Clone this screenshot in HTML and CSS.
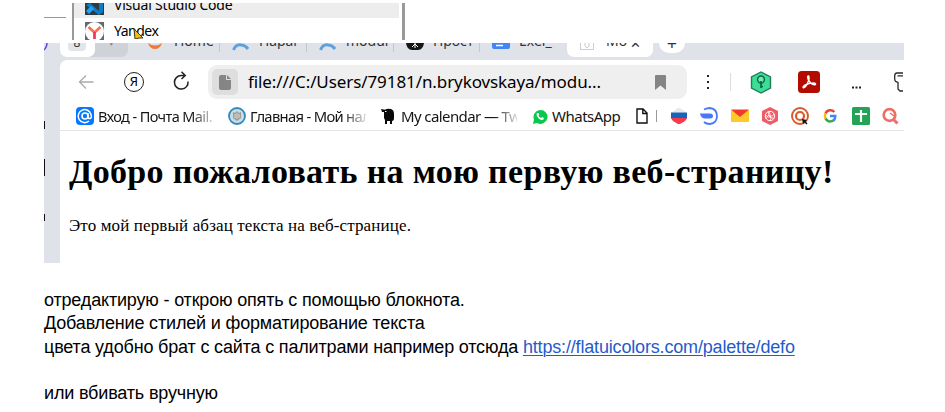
FILE: index.html
```html
<!DOCTYPE html>
<html lang="ru">
<head>
<meta charset="utf-8">
<title>Урок</title>
<link rel="stylesheet" href="styles.css">
</head>
<body>
<section class="menu">
  <div class="menu-left"></div>
  <div class="menu-list">
    <div class="menu-row selected">
      <svg width="19" height="12" viewBox="0 0 19 12"><path fill="#303943" d="M0 0h19v12H0z"/><path fill="#087dc8" d="M1 2l4-2 9 8V0h4v9l-4 3L1 2z"/><path fill="#22a5ee" d="M1 8l5-5 3 3-5 5z"/></svg>
      <span class="vs">Visual Studio Code</span>
    </div>
    <div class="menu-row yandex">
      <svg width="19" height="18" viewBox="0 0 19 18"><path fill="#686868" d="M0 0h19v18H0z"/><circle cx="9.5" cy="9.5" r="9.5" fill="#fff"/><path d="M3.5 5l6 5.500 6-5.500" fill="none" stroke="#ff6a4d" stroke-width="2.500"/><path d="M9.500 10v7" stroke="#f0355b" stroke-width="2.700"/></svg>
      <span class="ya">Yandex</span>
      <svg class="cursor" width="11" height="10" viewBox="0 0 11 10"><path d="M1 0l9 9-4 0-4 1z" fill="#f5b91b" stroke="#4b3a12"/></svg>
    </div>
  </div>
</section>

<section class="browser">
  <div class="tabs">
    <svg class="edge" width="4" height="17" viewBox="0 0 4 17"><path d="M0 7Q3 4 3 0" fill="none" stroke="#5b50df" stroke-width="1.500"/></svg>
    <div class="group"><div class="count"><b>8</b></div><i>▾</i></div>
    <svg class="jup" width="16" height="8" viewBox="0 0 16 8"><path d="M1 0q7 5 14 0-2 6-7 6T1 0z" fill="#f37a32"/></svg>
    <span class="tab t1">Home</span>
    <i class="sep"></i>
    <svg class="arc" width="18" height="8" viewBox="0 0 18 8"><path d="M1.500 7Q4 1 9 2q4 0 7 4" fill="none" stroke="#5f9fdb" stroke-width="3"/></svg>
    <span class="tab t2">Параг</span>
    <i class="sep"></i>
    <svg class="arc" width="18" height="8" viewBox="0 0 18 8"><path d="M1.500 7Q4 1 9 2q4 0 7 4" fill="none" stroke="#5f9fdb" stroke-width="3"/></svg>
    <span class="tab t3">modul</span>
    <i class="sep"></i>
    <svg class="gpt" width="18" height="8" viewBox="0 0 18 8"><path d="M0 0h18q-1 7-6 7H6Q1 7 0 0z" fill="#161616"/><path d="M6 4l3-3 3 3M9 0v5" fill="none" stroke="#fff"/></svg>
    <span class="tab t4">Прост</span>
    <i class="sep"></i>
    <svg class="docs" width="18" height="7" viewBox="0 0 18 7"><path d="M0 0h18v4q0 2-2 2H2Q0 6 0 4z" fill="#4285f4"/><path d="M4 2.500h7" stroke="#fff" stroke-width="1.500"/></svg>
    <span class="tab t5">Exel_</span>
    <div class="active"><svg width="14" height="8" viewBox="0 0 14 8"><path d="M.5 0v6.500h13V0M5 0v3l2 2 2-2V0" fill="none" stroke="#ccc"/></svg><span>Мо</span><em>✕</em></div>
    <div class="plus">+</div>
  </div>

  <div class="frame">
    <div class="side"><i class="m1"></i><i class="m2"></i><i class="m3"></i></div>
    <div class="window">
      <div class="toolbar">
        <svg class="back" width="16" height="16" viewBox="0 0 16 16"><path d="M15.500 8H1.500M8 1.500L1.500 8 8 14.500" fill="none" stroke="#aaa" stroke-width="1.300"/></svg>
        <div class="home">Я</div>
        <svg class="reload" width="17" height="20" viewBox="0 0 17 20"><path d="M15 10.500A6.800 6.800 0 1 1 8.200 4.500H12M8.500.8L12.200 4.500 8.500 8" fill="none" stroke="#222" stroke-width="1.500"/></svg>
        <div class="address">
          <div class="file"><svg width="12" height="15" viewBox="0 0 12 15"><path d="M2 0h5v5h5v8q0 2-2 2H2q-2 0-2-2V2q0-2 2-2zM8 0l4 4H8z" fill="#858585"/></svg></div>
          <span class="url">file:///C:/Users/79181/n.brykovskaya/modu...</span>
          <svg class="mark" width="11" height="15" viewBox="0 0 11 15"><path d="M0 1q0-1 1-1h9q1 0 1 1v14l-5.500-4.500L0 15z" fill="#858585"/></svg>
        </div>
        <svg class="dots" width="4" height="16" viewBox="0 0 4 16"><path d="M1 1h2v2H1zM1 7h2v2H1zM1 13h2v2H1z" fill="#222"/></svg>
        <i class="line"></i>
        <svg class="hex" width="22" height="23" viewBox="0 0 22 23"><path d="M11 1l9.500 5v11L11 22 1.500 17V6z" fill="#38df94" stroke="#277a5b" stroke-width="1.400"/><circle cx="11" cy="8.500" r="3.400" fill="#68efb2" stroke="#176349" stroke-width="1.500"/><path d="M11 10v7M13 15.500h-2" stroke="#176349" stroke-width="1.700"/></svg>
        <svg class="pdf" width="22" height="22" viewBox="0 0 22 22"><rect width="22" height="22" rx="3.500" fill="#b30b00"/><path d="M10.600 5c-2 0-.5 4.500 2 7 3 2.500 5.500 2 4.800.7-.8-1.300-6-.5-9 .8-3 1.300-4 3-2.800 3.200 2 .2 6.800-8.200 5-11.700z" fill="none" stroke="#fff" stroke-width="1.500"/></svg>
        <svg class="more" width="11" height="3" viewBox="0 0 11 3"><path d="M1 .5h2v2H1zM4.500.5h2v2h-2zM8 .5h2v2H8z" fill="#222"/></svg>
        <svg class="key" width="9" height="20" viewBox="0 0 9 20"><path d="M10 1H3Q.7 1 .7 4v3q0 2 1.300 2.700l2 .8V17l2 2h4M3.500 3.800H9" fill="none" stroke="#292929" stroke-width="1.300"/></svg>
      </div>
      <div class="bookmarks">
        <div class="bm b1"><svg width="18" height="18" viewBox="0 0 18 18"><rect width="18" height="18" rx="4" fill="#0877ff"/><circle cx="9" cy="9" r="3" fill="none" stroke="#fff" stroke-width="1.600"/><path d="M12 6v4q.3 2 2 1.500Q16 11 15 7.500A6.500 6.500 0 1 0 13 14" fill="none" stroke="#fff" stroke-width="1.500"/></svg><span class="fade">Вход - Почта Mail.</span></div>
        <div class="bm b2"><svg width="18" height="18" viewBox="0 0 18 18"><circle cx="9" cy="9" r="8" fill="#c9dce6" stroke="#3489bd" stroke-width="1.800"/><path d="M5 5l2 1 2-2 2 2 2-1v6l-4 3-4-3z" fill="#9b9c94"/><path d="M7 7v4M9 6v6M11 7v4" stroke="#ddd"/></svg><span class="fade">Главная - Мой нал</span></div>
        <div class="bm b3"><svg width="14" height="17" viewBox="0 0 14 17"><path d="M0 1l4 .8Q6 0 10 1q3 1 3 5v4q0 3-2 3v3H9v-3H6v3H4v-4L3 10V4H1z" fill="#090909"/><path d="M4 3.500h1.500" stroke="#fff"/></svg><span class="fade">My calendar — Tw</span></div>
        <div class="bm b4"><svg width="16" height="17" viewBox="0 0 16 17"><path d="M1 16L2 11.500A7 7 0 1 1 5 15z" fill="#08c94d"/><path d="M5 5q-1 1 0 3 2 4 5 4 2 0 2-2l-2-1-1 1Q7 9 6.500 7.500l.8-1L6.500 5z" fill="#fff"/></svg><span>WhatsApp</span></div>
        <div class="bm b5"><svg width="12" height="16" viewBox="0 0 12 16"><path d="M1 1h6l4 4v10H1zM6.800 1v4.500H11" fill="none" stroke="#111" stroke-width="1.400"/></svg><i></i></div>
        <svg class="ic" viewBox="0 0 18 18"><path d="M1.500 5.500L8 1q1-.5 2 0l6.500 4.500z" fill="#e8e9ee"/><path d="M1 5.500h16v6H1z" fill="#1764ba"/><path d="M1 11h16q-1 2-2 3l-5 3H8l-5-3q-1-1-2-3z" fill="#f43a4b"/></svg>
        <svg class="ic" viewBox="0 0 18 18"><path d="M0 6.500h10q3 0 3 2.500t-3 2.500H6Q1 12 0 6.500z" fill="#4678fa"/><path d="M4 2.500Q7 1 10 1q7 1 7 8t-7 8q-4 0-6-2" fill="none" stroke="#4678fa" stroke-width="1.800"/></svg>
        <svg class="ic" viewBox="0 0 18 18"><path d="M0 3h18v12H0z" fill="#ffca28"/><path d="M0 2.500h18L9 10z" fill="#ef3a2d"/></svg>
        <svg class="ic" viewBox="0 0 18 18"><path d="M9 0l8 4v10l-8 4-8-4V4z" fill="#ee5c66"/><circle cx="9" cy="9" r="4.700" fill="none" stroke="#fff"/><path d="M9 4q-3 4 0 5t4-2M5 8q3 4 4 1t-2-4M9 14q2-3 0-5t-4 3M13 11q-4 1-4-2" fill="none" stroke="#fff" stroke-width=".8"/></svg>
        <svg class="ic" viewBox="0 0 18 18"><circle cx="9" cy="9" r="8" fill="#fff" stroke="#db5928" stroke-width="1.900"/><circle cx="9" cy="9" r="4" fill="none" stroke="#db5928" stroke-width="2.200"/><path d="M11 12l5 1-1.500 1.500 2 2-1 1-2-2L12 17z" fill="#111"/></svg>
        <svg class="ic" viewBox="0 0 18 18" fill="none" stroke-width="2.500"><path d="M13.300 5A5.300 5.300 0 0 0 4.500 6.500" stroke="#ea4335"/><path d="M4.300 6.500q-1 3 .2 5" stroke="#fbbc05"/><path d="M4.500 11.500q3.500 5 8.500 1.500" stroke="#34a853"/><path d="M9 9h5.300q0 3-1.700 4.500" stroke="#4285f4"/></svg>
        <svg class="ic" viewBox="0 0 18 18"><rect width="18" height="18" rx="1.500" fill="#23a455"/><path d="M9 3v12M3 7h12" stroke="#fff" stroke-width="2.200"/></svg>
        <svg class="ic last" viewBox="0 0 18 18"><circle cx="7.500" cy="8" r="5.800" fill="none" stroke="#ee6e68" stroke-width="2.700"/><path d="M11 12l4.500 4.500" stroke="#ee6e68" stroke-width="3"/><path d="M8 6l4 3" stroke="#ee6e68" stroke-width="1.500"/></svg>
      </div>
      <div class="page">
        <h1>Добро пожаловать на мою первую веб-страницу!</h1>
        <p>Это мой первый абзац текста на веб-странице.</p>
      </div>
    </div>
  </div>
</section>

<section class="notes">
  <p>отредактирую - открою опять с помощью блокнота.</p>
  <p>Добавление стилей и форматирование текста</p>
  <p>цвета удобно брат с сайта с палитрами например отсюда <a href="#">https://flatuicolors.com/palette/defo</a></p>
  <p class="gap">или вбивать вручную</p>
</section>
</body>
</html>
```
FILE: styles.css
```css
* { box-sizing: border-box; }
body { margin: 0; padding: 3px 0 0 44px; background: #fff; color: #000; overflow: hidden; height: 412px; }
svg { display: block; flex: none; }
i, em { font-style: normal; }

.menu { display: flex; height: 37px; width: 361px; overflow: hidden; border-right: 3px solid #999; font: 14px "Noto Sans", sans-serif; }
.menu-left { width: 30px; border-right: 2px solid #999; background: linear-gradient(#999, #999) 0 14px / 22px 1px no-repeat; }
.menu-list { flex: 1; }
.menu-row { display: flex; padding-left: 11px; }
.menu-row span { white-space: nowrap; margin-left: 10px; letter-spacing: -.2px; }
.selected { height: 15px; background: #ededed; margin-right: 3px; }
.vs { line-height: 18px; margin-top: -7px; }
.yandex { height: 22px; padding-top: 4px; position: relative; }
.menu-row .ya { line-height: 18px; letter-spacing: -.5px; }
.cursor { position: absolute; left: 59px; top: 11px; }

.browser { width: 860px; height: 220px; margin-top: 3px; overflow: hidden; font-family: "Noto Sans", sans-serif; background: #dfe2e9; }
.tabs { display: flex; height: 17px; overflow: hidden; font-size: 14px; color: #333; }
.tab { height: 17px; line-height: 18px; margin-top: -11px; white-space: nowrap; overflow: hidden; }
.edge { margin-right: 12px; }
.group { width: 68px; height: 14px; border-radius: 0 0 7px 7px; background: #cfd2d8; display: flex; }
.count { width: 35px; height: 14px; background: #fff; border-radius: 0 0 7px 7px; padding-left: 8px; }
.count b { display: block; width: 18px; height: 8px; border-radius: 0 0 4px 4px; background: #e2e5ea; font-size: 12px; line-height: 0; text-align: center; font-weight: 400; overflow: hidden; }
.group i { margin-left: 14px; font-size: 9px; line-height: 0; color: #888; }
.jup { margin: 0 11px 0 19px; }
.t1 { width: 45px; }
.sep { width: 1px; height: 9px; background: #c4c7ce; }
.arc { margin: 0 9px 0 12px; }
.t2, .t3 { width: 47px; }
.gpt { margin: 0 9px 0 12px; }
.t4 { width: 46px; }
.docs { margin: 0 9px 0 12px; }
.t5 { width: 48px; }
.active { width: 86px; height: 14px; background: #fff; border-radius: 0 0 7px 7px; padding-left: 13px; display: flex; }
.active span { margin: -11px 0 0 12px; line-height: 18px; width: 24px; overflow: hidden; }
.active em { line-height: 0; font-size: 13px; }
.plus { width: 26px; height: 10px; background: #fff; border-radius: 0 0 13px 13px; margin-left: 6px; text-align: center; line-height: 0; font-size: 18px; }

.frame { display: flex; height: 203px; }
.side { width: 16px; display: flex; flex-direction: column; }
.side i { width: 1px; background: #111; }
.m1 { margin-top: 61px; height: 8px; }
.m2 { margin-top: 30px; height: 17px; }
.m3 { margin-top: 38px; height: 7px; }
.window { width: 844px; background: #fff; border-top-left-radius: 7px; }
.toolbar { height: 44px; display: flex; align-items: center; }
.back { margin-left: 18px; }
.home { width: 20px; height: 20px; border: 1.5px solid #222; border-radius: 50%; margin-left: 30px; font-size: 13px; line-height: 17px; text-align: center; }
.reload { margin: -3px 18px 0 29px; }
.address { width: 479px; height: 34px; border-radius: 9px; background: #efefef; display: flex; align-items: center; padding-left: 4px; }
.file { width: 26px; height: 26px; border-radius: 5px; background: #dedede; display: grid; place-items: center; }
.url { margin-left: 10px; width: 353px; white-space: nowrap; font-size: 17px; line-height: 26px; letter-spacing: -.09px; }
.mark { margin-left: 54px; }
.dots { margin-left: 19px; }
.line { width: 1px; height: 18px; background: #ddd; margin-left: 20px; }
.hex { margin-left: 19px; }
.pdf { margin-left: 26px; }
.more { margin: 10px 0 0 31px; }
.key { margin-left: 32px; }

.bookmarks { height: 27px; border-bottom: 1px solid #e3e4e6; display: flex; padding: 0 0 2px 16px; align-items: center; font-size: 15px; letter-spacing: -.5px; color: #151515; overflow: hidden; }
.bm { display: flex; align-items: center; flex: none; white-space: nowrap; }
.bm span { margin-left: 4px; line-height: 22px; }
.fade { width: 116px; overflow: hidden; -webkit-mask-image: linear-gradient(90deg, #000 80%, rgba(0, 0, 0, .15)); mask-image: linear-gradient(90deg, #000 80%, rgba(0, 0, 0, .15)); }
.b1 { width: 152px; font-size: 14.500px; letter-spacing: -.6px; }
.b2 { width: 153px; font-size: 14.800px; letter-spacing: -.7px; }
.b3 { width: 151px; }
.b3 span { margin-left: 6px; letter-spacing: -.6px; }
.b4 { width: 104px; }
.b5 { width: 34px; }
.b5 i { width: 1px; height: 12px; background: #999; margin-left: 8px; }
.ic { width: 18px; height: 18px; margin-right: 12.300px; }
.last { margin-right: 0; }
.page { padding: 22px 0 0 9px; font-family: "Liberation Serif", serif; }
.page h1 { margin: 0; font-size: 34px; line-height: 38px; white-space: nowrap; letter-spacing: .31px; }
.page p { margin: 25px 0 0; font-size: 17px; line-height: 20px; white-space: nowrap; letter-spacing: .13px; }

.notes { padding-top: 26px; font: 18px/23.300px "Liberation Sans", sans-serif; letter-spacing: -.17px; white-space: nowrap; }
.notes p { margin: 0; }
.notes .gap { margin-top: 23.300px; }
.notes a { color: #1f5ccc; text-decoration-thickness: 1px; text-underline-offset: 2px; }
```
